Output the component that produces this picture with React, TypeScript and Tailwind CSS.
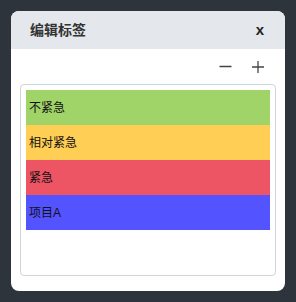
import React from "react";

const tags = [
  { id: "1", name: "不紧急", color: "bg-[#a0d468]" },
  { id: "2", name: "相对紧急", color: "bg-[#ffce54]" },
  { id: "3", name: "紧急", color: "bg-[#ed5565]" },
  { id: "4", name: "项目A", color: "bg-[#5353ff]" },
];

const App = () => {
  return (
    <div
      className="w-[296px] h-[302px] bg-[#2d343b] p-[11px]"
      style={{ fontFamily: '"Liberation Sans", "Noto Sans CJK SC", sans-serif' }}
    >
      <div className="bg-white rounded-lg overflow-hidden h-[280px] flex flex-col">
        <div className="bg-[#e4e7eb] h-[38px] flex items-center justify-between pl-[19px] pr-[21px]">
          <h2 className="text-[14px] font-bold text-[#333]">编辑标签</h2>
          <span className="text-[15px] font-bold text-[#222] leading-none mb-[1px]">x</span>
        </div>

        <div className="flex justify-end items-center gap-[20px] h-[35px] pr-[21px]">
          <svg width="13" height="13" viewBox="0 0 13 13">
            <path d="M0.5 6.5h12" stroke="#444" strokeWidth="1.3" />
          </svg>
          <svg width="12" height="12" viewBox="0 0 12 12">
            <path d="M0 6h12M6 0v12" stroke="#444" strokeWidth="1.3" />
          </svg>
        </div>

        <div className="mx-[9px] h-[192px] border border-[#cfd3da] rounded-[4px] pt-[5px] px-[5px]">
          {tags.map((tag) => (
            <div
              key={tag.id}
              className={`${tag.color} h-[35px] flex items-center pl-[3px] text-[12px] text-[#111]`}
            >
              {tag.name}
            </div>
          ))}
        </div>
      </div>
    </div>
  );
};

export default App;
